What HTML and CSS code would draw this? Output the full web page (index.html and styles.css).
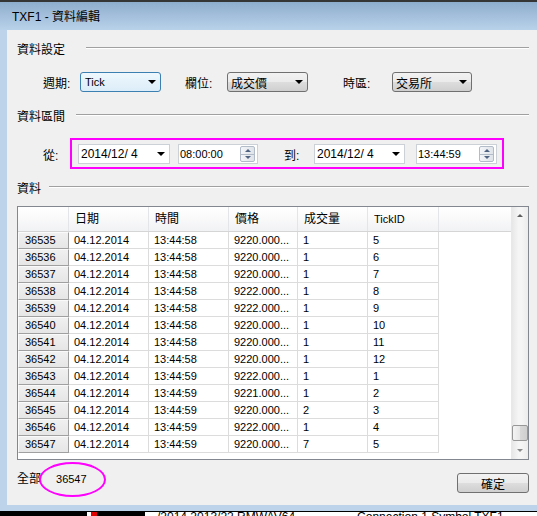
FILE: index.html
```html
<!DOCTYPE html>
<html lang="zh-Hant">

<head>
    <meta charset="UTF-8">
    <title>TXF1 - 資料編輯</title>
    <link rel="stylesheet" href="styles.css">
</head>

<body>
    <div class="window">
        <!-- 標題列 -->
        <div class="titlebar">TXF1 - 資料編輯</div>
        <div class="frame">
            <div class="client">
                <!-- 資料設定 -->
                <div class="group-head">
                    <span>資料設定</span><i class="etch etch-wide"></i>
                </div>
                <div class="settings-row">
                    <span class="field-label fl-1">週期:</span>
                    <div class="combo combo-focus latin"><span>Tick</span><i class="arrow"></i></div>
                    <span class="field-label fl-2">欄位:</span>
                    <div class="combo"><span>成交價</span><i class="arrow"></i></div>
                    <span class="field-label fl-3">時區:</span>
                    <div class="combo combo-narrow"><span>交易所</span><i class="arrow"></i></div>
                </div>

                <!-- 資料區間 -->
                <div class="group-head head-range">
                    <span>資料區間</span><i class="etch etch-mid"></i>
                </div>
                <div class="range-row">
                    <span class="field-label rl-from">從:</span>
                    <div class="date"><span>2014/12/ 4</span><i class="arrow"></i></div>
                    <div class="time t-from"><span>08:00:00</span>
                        <div class="spin"><i class="spin-up"></i><i class="spin-down"></i></div>
                    </div>
                    <span class="field-label rl-to">到:</span>
                    <div class="date date-to"><span>2014/12/ 4</span><i class="arrow"></i></div>
                    <div class="time t-to"><span>13:44:59</span>
                        <div class="spin"><i class="spin-up"></i><i class="spin-down"></i></div>
                    </div>
                    <div class="mark-box"></div>
                </div>

                <!-- 資料 -->
                <div class="group-head head-data">
                    <span>資料</span><i class="etch etch-short"></i>
                </div>
                <div class="grid">
                    <div class="sheet">
                        <div class="grid-head">
                            <div class="hc"></div>
                            <div class="hc">日期</div>
                            <div class="hc">時間</div>
                            <div class="hc">價格</div>
                            <div class="hc">成交量</div>
                            <div class="hc latin">TickID</div>
                        </div>
                        <div id="rows"></div>
                    </div>
                    <div class="vscroll">
                        <div class="sb-btn"><i class="sb-up"></i></div>
                        <div class="sb-track"><div class="sb-thumb"></div></div>
                        <div class="sb-btn"><i class="sb-down"></i></div>
                    </div>
                </div>

                <!-- 底部 -->
                <div class="footer">
                    <span class="total-label">全部</span>
                    <span class="total-count">36547</span>
                    <div class="mark-oval"></div>
                    <button class="ok-btn">確定</button>
                </div>
            </div>
        </div>
    </div>
    <!-- 後方視窗露出的部分 -->
    <div class="backdrop">
        <div class="bd-dark"><i class="bd-red"></i></div>
        <div class="bd-text">/2014 2013/22 RMWAV64</div>
        <div class="bd-text bd-conn">Connection 1 Symbol TXF1</div>
    </div>

    <script>
        // 資料列
        const data = [
            [36535, '13:44:58', '9220', 1, 5],
            [36536, '13:44:58', '9220', 1, 6],
            [36537, '13:44:58', '9220', 1, 7],
            [36538, '13:44:58', '9222', 1, 8],
            [36539, '13:44:58', '9222', 1, 9],
            [36540, '13:44:58', '9220', 1, 10],
            [36541, '13:44:58', '9220', 1, 11],
            [36542, '13:44:58', '9220', 1, 12],
            [36543, '13:44:59', '9222', 1, 1],
            [36544, '13:44:59', '9221', 1, 2],
            [36545, '13:44:59', '9220', 2, 3],
            [36546, '13:44:59', '9222', 1, 4],
            [36547, '13:44:59', '9220', 7, 5]
        ];

        const rows = document.getElementById('rows');
        data.forEach(d => {
            const row = document.createElement('div');
            row.className = 'grid-row';
            row.innerHTML =
                `<div class="rh">${d[0]}</div>` +
                `<div class="c">04.12.2014</div>` +
                `<div class="c">${d[1]}</div>` +
                `<div class="c">${d[2]}.000...</div>` +
                `<div class="c">${d[3]}</div>` +
                `<div class="c">${d[4]}</div>`;
            rows.appendChild(row);
        });
    </script>
</body>

</html>
```

FILE: styles.css
```css
/* 全域 */
* {
    box-sizing: border-box;
}

html,
body {
    margin: 0;
    padding: 0;
}

body {
    width: 537px;
    height: 516px;
    overflow: hidden;
    background-color: #fff;
    color: #000;
    font-family: "Liberation Sans", "Noto Sans CJK TC", sans-serif;
    font-size: 12px;
}

.latin {
    font-size: 11px;
}

/* 視窗外框 */
.window {
    display: flex;
    flex-direction: column;
    height: 511px;
}

.titlebar {
    height: 30px;
    padding: 3px 0 0 12px;
    line-height: 25px;
    border-top: 2px solid #353535;
    background: linear-gradient(#8eadcd, #b9d2ea);
}

.frame {
    flex: 1;
    display: flex;
    border-left: 7px solid #bcd3ea;
    border-bottom: 6px solid #bcd3ea;
}

.client {
    flex: 1;
    display: flex;
    flex-direction: column;
    padding: 10px 8px 0 10px;
    background-color: #f0f0f0;
}

/* 群組標題 */
.group-head {
    display: flex;
    align-items: center;
    height: 16px;
}

.etch {
    flex: 1;
    border-top: 1px solid #a0a0a0;
    border-bottom: 1px solid #fff;
}

.etch-wide {
    margin-left: 21px;
}

.etch-mid {
    margin-left: 11px;
}

.etch-short {
    margin-left: 8px;
}

.head-range {
    margin-top: 15px;
}

.head-data {
    margin-top: 15px;
}

/* 欄位標籤 */
.field-label {
    flex: none;
}

.fl-1 {
    width: 37px;
}

.fl-2 {
    width: 42px;
    margin-left: 24px;
}

.fl-3 {
    width: 49px;
    margin-left: 35px;
}

.rl-from {
    width: 35px;
}

.rl-to {
    width: 30px;
    margin-left: 26px;
}

/* 下拉選單 */
.settings-row {
    display: flex;
    align-items: center;
    height: 20px;
    margin-top: 16px;
    padding-left: 26px;
}

.combo {
    display: flex;
    align-items: center;
    justify-content: space-between;
    width: 81px;
    height: 20px;
    padding: 0 4px 0 3px;
    border: 1px solid #707070;
    border-radius: 3px;
    background: linear-gradient(#f2f2f2 0%, #ebebeb 48%, #dddddd 52%, #cfcfcf 100%);
}

.combo-narrow {
    width: 80px;
}

.combo-focus {
    padding-left: 4px;
    border-color: #3c7fb1;
    background: linear-gradient(#eef7fd, #dcedf9);
}

.arrow {
    width: 0;
    height: 0;
    border-left: 4px solid transparent;
    border-right: 4px solid transparent;
    border-top: 4px solid #000;
}

/* 日期時間 */
.range-row {
    position: relative;
    display: flex;
    align-items: center;
    height: 20px;
    margin-top: 21px;
    padding-left: 26px;
}

.date {
    display: flex;
    align-items: center;
    justify-content: space-between;
    width: 92px;
    height: 20px;
    padding: 0 4px 0 2px;
    border: 1px solid #ccd1d8;
    background-color: #fff;
}

.date-to {
    width: 91px;
}

.time {
    display: flex;
    align-items: center;
    justify-content: space-between;
    width: 80px;
    height: 20px;
    padding: 0 2px 0 1px;
    border: 1px solid #ccd1d8;
    background-color: #fff;
    font-size: 11px;
}

.t-from {
    margin-left: 8px;
}

.t-to {
    margin-left: 11px;
    width: 81px;
}

.spin {
    display: flex;
    flex-direction: column;
    width: 15px;
    height: 16px;
    border: 1px solid #b2bcc8;
    border-radius: 2px;
    background: linear-gradient(90deg, #f3f5f8, #dfe4ea);
}

.spin i {
    flex: 1;
    display: flex;
    align-items: center;
    justify-content: center;
}

.spin-up {
    border-bottom: 1px solid #b2bcc8;
}

.spin-up::after {
    content: "";
    border-left: 3px solid transparent;
    border-right: 3px solid transparent;
    border-bottom: 3px solid #4e6381;
}

.spin-down::after {
    content: "";
    border-left: 3px solid transparent;
    border-right: 3px solid transparent;
    border-top: 3px solid #4e6381;
}

/* 標註框 */
.mark-box {
    position: absolute;
    left: 53px;
    top: -6px;
    width: 434px;
    height: 31px;
    border: 2px solid #ff00ff;
}

/* 資料表 */
.grid {
    display: flex;
    height: 254px;
    margin-top: 11px;
    border: 1px solid #828790;
    background-color: #fff;
}

.sheet {
    flex: 1;
    overflow: hidden;
}

.grid-head,
.grid-row {
    display: grid;
    grid-template-columns: 51px 80px 80px 69px 70px 71px;
}

.grid-head {
    height: 25px;
    border-bottom: 1px solid #d5d5d5;
    background: linear-gradient(#ffffff, #f9f9fa 50%, #f1f2f4);
}

.hc {
    padding-left: 6px;
    line-height: 24px;
    border-right: 1px solid #e3e5e8;
}

.grid-row {
    height: 17px;
}

.rh {
    padding-left: 6px;
    line-height: 15px;
    font-size: 11px;
    border-top: 1px solid #fafafa;
    border-left: 1px solid #fafafa;
    border-right: 1px solid #a0a0a0;
    border-bottom: 1px solid #a0a0a0;
    background: linear-gradient(#f0f0f0, #e6e6e6);
}

.c {
    padding-left: 5px;
    line-height: 16px;
    font-size: 11px;
    white-space: nowrap;
    overflow: hidden;
    border-right: 1px solid #dcdcdc;
    border-bottom: 1px solid #dcdcdc;
}

/* 捲軸 */
.vscroll {
    display: flex;
    flex-direction: column;
    width: 17px;
    border-left: 1px solid #e8e8e8;
    background: linear-gradient(90deg, #e7e7e7, #f5f5f5 40%, #f5f5f5 60%, #ececec);
}

.sb-btn {
    display: flex;
    align-items: center;
    justify-content: center;
    height: 17px;
}

.sb-up {
    border-left: 3px solid transparent;
    border-right: 3px solid transparent;
    border-bottom: 3px solid #5e5e5e;
}

.sb-down {
    border-left: 3px solid transparent;
    border-right: 3px solid transparent;
    border-top: 3px solid #8a8a8a;
}

.sb-track {
    flex: 1;
    display: flex;
    flex-direction: column;
    justify-content: flex-end;
    padding-bottom: 1px;
}

.sb-thumb {
    height: 16px;
    margin: 0 0 0 0;
    border: 1px solid #979797;
    border-radius: 2px;
    background: linear-gradient(90deg, #f4f4f4, #e6e6e6 50%, #d8d8d8 51%, #cfcfcf);
}

/* 底部 */
.footer {
    position: relative;
    display: flex;
    align-items: flex-start;
    margin-top: 13px;
}

.total-label {
    margin-top: -1px;
    line-height: 14px;
}

.total-count {
    margin-left: 15px;
    margin-top: -1px;
    line-height: 14px;
    font-size: 11px;
}

.mark-oval {
    position: absolute;
    left: 22px;
    top: -11px;
    width: 67px;
    height: 35px;
    border: 2px solid #ff00ff;
    border-radius: 50%;
}

.ok-btn {
    margin-left: auto;
    width: 72px;
    height: 20px;
    padding: 0;
    font-family: inherit;
    font-size: 12px;
    color: #000;
    border: 1px solid #707070;
    border-radius: 3px;
    background: linear-gradient(#f2f2f2 0%, #ebebeb 48%, #dddddd 52%, #cfcfcf 100%);
}

/* 後方視窗 */
.backdrop {
    display: flex;
    height: 5px;
    overflow: hidden;
    border-top: 1px solid #000;
}

.bd-dark {
    position: relative;
    width: 145px;
    background-color: #000;
}

.bd-red {
    position: absolute;
    left: 87px;
    top: 0;
    width: 10px;
    height: 4px;
    border-left: 4px solid #fff;
    background-color: #e00000;
}

.bd-text {
    margin-left: 12px;
    margin-top: -2px;
    font-size: 12px;
    line-height: 14px;
    white-space: nowrap;
}

.bd-conn {
    margin-left: 62px;
}
```
